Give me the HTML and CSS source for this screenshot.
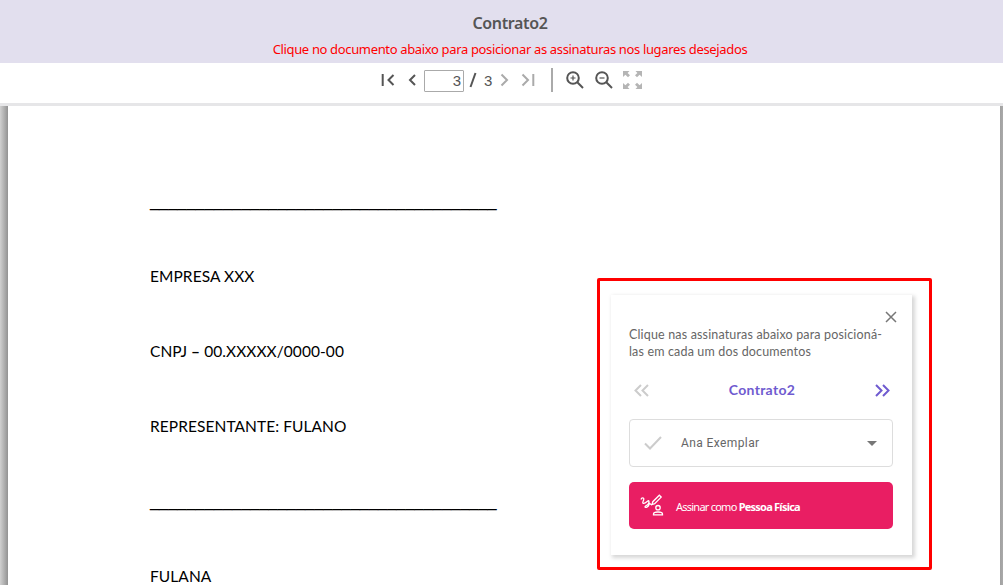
FILE: index.html
```html
<!DOCTYPE html>
<html lang="pt-BR">
<head>
<meta charset="utf-8">
<title>Contrato2</title>
<link rel="stylesheet" href="styles.css">
</head>
<body>
<header class="header">
  <h1 class="title">Contrato2</h1>
  <p class="hint">Clique no documento abaixo para posicionar as assinaturas nos lugares desejados</p>
</header>
<nav class="toolbar">
  <svg class="first" width="14" height="14" viewBox="0 0 14 14"><path d="M1.700 1v12M12.500 2L7.500 7l5 5"/></svg>
  <svg class="prev" width="9" height="14" viewBox="0 0 9 14"><path d="M7 2L2 7l5 5"/></svg>
  <span class="page-input">3</span>
  <svg class="slash" width="8" height="16" viewBox="0 0 8 16"><path d="M6.500 1L1.500 15"/></svg>
  <span class="page-total">3</span>
  <svg class="next muted" width="9" height="14" viewBox="0 0 9 14"><path d="M1.500 1.500L7 7l-5.500 5.500"/></svg>
  <svg class="last muted" width="14" height="14" viewBox="0 0 14 14"><path d="M1.500 1.500L7 7l-5.500 5.500M12.300 1v12"/></svg>
  <span class="divider"></span>
  <svg class="zoom-in" width="18" height="18" viewBox="0 0 18 18"><circle cx="7" cy="7" r="5.800"/><path d="M11.300 11.300L17 17"/><path class="thin" d="M4.500 7h5M7 4.500v5"/></svg>
  <svg class="zoom-out" width="18" height="18" viewBox="0 0 18 18"><circle cx="7" cy="7" r="5.800"/><path d="M11.300 11.300L17 17"/><path class="thin" d="M4.500 7h5"/></svg>
  <svg class="expand" width="19" height="18" viewBox="0 0 19 18"><path d="M0 0h6.500L4.600 1.900l2.400 2.400-2 2-2.600-2.500L0 6zM19 0h-6.500l1.900 1.900L12 4.300l2 2 2.600-2.500L19 6zM0 18h6.500l-1.900-1.900L7 13.700l-2-2-2.600 2.500L0 12zM19 18h-6.500l1.900-1.900-2.400-2.400 2-2 2.600 2.500L19 12z"/></svg>
</nav>
<main class="viewer">
  <article class="page">
    <p class="line rule">______________________________________</p>
    <p class="line">EMPRESA XXX</p>
    <p class="line">CNPJ <b>–</b> 00.XXXXX/0000-00</p>
    <p class="line">REPRESENTANTE: FULANO</p>
    <p class="line rule">______________________________________</p>
    <p class="line final">FULANA</p>
  </article>
  <aside class="highlight">
    <section class="panel">
      <svg class="close" width="12" height="12" viewBox="0 0 12 12"><path d="M1 1l10 10M11 1L1 11"/></svg>
      <p class="help">Clique nas assinaturas abaixo para posicioná-<br>las em cada um dos documentos</p>
      <div class="switcher">
        <svg class="back" width="15" height="13" viewBox="0 0 15 13"><path d="M7 1L1.500 6.500 7 12M14 1L8.500 6.500 14 12"/></svg>
        <strong class="doc-name">Contrato2</strong>
        <svg class="forward" width="15" height="13" viewBox="0 0 15 13"><path d="M1 1l5.500 5.500L1 12M8 1l5.500 5.500L8 12"/></svg>
      </div>
      <div class="select">
        <svg class="check" width="18" height="14" viewBox="0 0 18 14"><path d="M1 7.500l5 5L17 1"/></svg>
        <span class="signer">Ana Exemplar</span>
        <svg class="caret" width="10" height="5" viewBox="0 0 10 5"><path d="M0 0h10L5 5z"/></svg>
      </div>
      <button class="sign">
        <svg class="pen" width="24" height="23" viewBox="0 0 24 23"><path d="M1 5.500C1.500 3.500 4 3.500 3.800 5.300S2 8.300 3 9.200s3-.7 4.500-2 2 .3 1 2.300-3.700 2.300-3.500 3.500S8.500 13 9 10.500s1.500.5 3 0"/><path d="M12 10.500l.8-2.800L19.300 1.200l1.900 1.900-6.500 6.500z"/><circle cx="18" cy="13.700" r="2.200"/><path d="M13.500 20.800v-.8c0-1.600 2-2 4.500-2s4.500.4 4.500 2v.8z"/></svg>
        <span class="sign-label">Assinar como <b>Pessoa Física</b></span>
      </button>
    </section>
  </aside>
</main>
</body>
</html>
```
FILE: styles.css
```css
* { box-sizing: border-box; }
body { margin: 0; width: 1003px; height: 585px; overflow: hidden; background: #fff; color: #555; font-family: "Open Sans", sans-serif; display: flex; flex-direction: column; }
p, h1 { margin: 0; white-space: nowrap; }
svg { display: block; flex: none; fill: none; stroke: #555; stroke-width: 2; }
.header { height: 63px; flex: none; background: #e2dfee; padding: 12px 0 0 17px; text-align: center; }
.title { font: 600 16px/22px "Noto Sans", sans-serif; letter-spacing: -.35px; color: #555; }
.hint { font: 400 13px/18px "Noto Sans", sans-serif; letter-spacing: -.35px; color: #f00; margin-top: 6px; }
.toolbar { height: 43px; flex: none; border-bottom: 3px solid #e6e6e8; display: flex; align-items: center; padding: 0 0 6px 381px; }
.muted { stroke: #aaa; }
.prev { margin-left: 13px; }
.page-input { width: 40px; height: 22px; margin: 2px 0 0 7px; border: 1px solid #aaa; border-radius: 1px; text-align: right; padding-right: 2px; font: 15px/20px "Liberation Sans", sans-serif; }
.slash { margin-left: 5px; }
.page-total { margin: 1px 0 0 7px; font: 15px/21px "Liberation Sans", sans-serif; }
.next { margin-left: 8px; }
.last { margin-left: 12px; }
.divider { width: 2px; height: 24px; background: #aaa; margin: 0 13px 0 16px; }
.zoom-out { margin-left: 11px; }
.thin { stroke-width: 1.2; }
.expand { margin-left: 10px; fill: #b5b5b5; stroke: none; }
.viewer { flex: 1; min-height: 0; display: flex; position: relative; overflow: hidden; background: linear-gradient(90deg, #d0d0d0 0, #929292 8px, #929292 995px, #aaa 1003px); padding: 0 3px 0 8px; }
.page { flex: 1; background: #fff; padding: 83px 0 0 142px; color: #000; font: 15.500px/24px Lato, sans-serif; letter-spacing: .07px; }
.line { height: 75px; }
.final { height: 21px; }
.rule { font: 16.420px/24px "Liberation Sans", sans-serif; letter-spacing: 0; }
.highlight { position: absolute; left: 597px; top: 172px; width: 335px; height: 292px; border: 3px solid #f00; border-radius: 2px; padding: 14px 17px 12px 11px; }
.panel { width: 301px; height: 260px; padding: 16px 19px 0 18px; background: #fff; box-shadow: 2px 2px 4px 1px rgba(0,0,0,.16); display: flex; flex-direction: column; }
.close { align-self: flex-end; margin-right: -4px; stroke: #777; stroke-width: 1.500; }
.help { margin-top: 3px; font: 12.500px/17px Lato, sans-serif; letter-spacing: .16px; color: #666; }
.switcher { display: flex; align-items: center; justify-content: space-between; margin-top: 20px; height: 20px; padding: 0 3px 0 5px; }
.back { stroke: #ccc; }
.forward { stroke: #6f5bd0; }
.doc-name { font: 700 14px/20px Lato, sans-serif; letter-spacing: .3px; color: #6f5bd0; }
.select { height: 48px; flex: none; margin-top: 19px; border: 1px solid #ddd; border-radius: 4px; display: flex; align-items: center; padding: 0 15px 0 14px; }
.check { stroke: #ccc; }
.signer { flex: 1; margin-left: 19px; font: 12px/20px Roboto, sans-serif; letter-spacing: .4px; color: #666; }
.caret { fill: #777; stroke: none; }
.sign { height: 47px; flex: none; margin-top: 15px; border: 0; border-radius: 5px; background: #e91e63; color: #fff; display: flex; align-items: center; padding: 0 0 0 11px; }
.pen { stroke: #fff; stroke-width: 1.300; }
.sign-label { margin: 2px 0 0 12px; font: 11px/16px "Noto Sans", sans-serif; letter-spacing: -.76px; white-space: nowrap; }
```
